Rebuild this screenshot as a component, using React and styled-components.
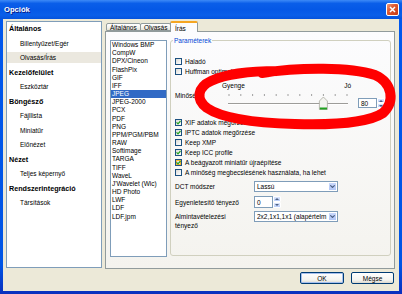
import React from 'react';
import styled, { createGlobalStyle } from 'styled-components';

const GlobalStyle = createGlobalStyle`
  html, body { margin: 0; padding: 0; background: #fff; }
  body {
    font-family: "Liberation Sans", Arial, sans-serif;
    font-size: 6.5px;
    color: #000;
  }
  * { box-sizing: border-box; }
`;

const Window = styled.div`
  position: relative;
  width: 402px;
  height: 294px;
  display: flex;
  flex-direction: column;
  background: linear-gradient(180deg, #0058ee 0%, #0055e5 90%, #0a2fbd 100%);
  overflow: hidden;
`;

const TitleBar = styled.div`
  height: 19px;
  flex-shrink: 0;
  display: flex;
  align-items: center;
  justify-content: space-between;
  padding: 0 3px 0 4px;
  background: linear-gradient(180deg, #3d8af7 0%, #0a5ee9 18%, #0558e6 50%, #0a5fe9 80%, #0553dc 100%);
`;

const Title = styled.span`
  color: #fff;
  font-weight: bold;
  font-size: 7.6px;
  text-shadow: 1px 1px 0 #0a1c86;
`;

const CloseButton = styled.div`
  width: 13px;
  height: 13px;
  border: 1px solid #fff;
  border-radius: 2px;
  background: linear-gradient(135deg, #f09a7c 0%, #e05a32 40%, #c73a12 100%);
  display: flex;
  align-items: center;
  justify-content: center;
`;

const Body = styled.div`
  flex: 1;
  margin: 0 3px 3px;
  background: #ece9d8;
  display: flex;
  flex-direction: column;
  padding: 2px 3px 0;
`;

const MainRow = styled.div`
  display: flex;
  gap: 3px;
  height: 249px;
`;

const Tree = styled.div`
  width: 96px;
  height: 247px;
  background: #fff;
  border: 1px solid #7f9db9;
  padding-top: 1px;
`;

const TreeRow = styled.div`
  height: 11px;
  margin-bottom: 3.5px;
  display: flex;
  align-items: center;
  white-space: nowrap;
  padding-left: ${p => (p.$heading ? 2 : 13)}px;
  font-weight: ${p => (p.$heading ? 'bold' : 'normal')};
  font-size: ${p => (p.$heading ? 7.2 : 6.5)}px;
  background: ${p => (p.$selected ? '#ebe8df' : 'transparent')};
`;

const TabControl = styled.div`
  width: 290px;
  display: flex;
  flex-direction: column;
`;

const TabStrip = styled.div`
  height: 10px;
  display: flex;
  align-items: flex-end;
  padding-left: 1px;
`;

const Tab = styled.div`
  position: relative;
  width: ${p => p.$w}px;
  height: ${p => (p.$active ? 11 : 8)}px;
  margin-bottom: ${p => (p.$active ? -1 : 0)}px;
  padding: ${p => (p.$active ? '2px 0 0 4px' : '0 0 0 3px')};
  display: flex;
  align-items: ${p => (p.$active ? 'flex-start' : 'center')};
  border: 1px solid #919b9c;
  border-bottom: ${p => (p.$active ? 'none' : '1px solid #919b9c')};
  border-top: ${p => (p.$active ? '2px solid #f5a623' : '1px solid #919b9c')};
  border-radius: 2px 2px 0 0;
  background: ${p => (p.$active ? '#fcfcfe' : 'linear-gradient(180deg, #fff 0%, #f3f2ee 60%, #e3e1d8 100%)')};
  margin-right: ${p => (p.$active ? 0 : -1)}px;
  z-index: ${p => (p.$active ? 2 : 1)};
  white-space: nowrap;
`;

const Panel = styled.div`
  height: 238px;
  border: 1px solid #919b9c;
  background: linear-gradient(180deg, #fcfcfe 0%, #f4f3ee 100%);
  display: flex;
  gap: 3px;
  padding: 8px 3px 0 4px;
`;

const FormatList = styled.div`
  width: 57px;
  height: 217px;
  border: 1px solid #7f9db9;
  background: #fff;
`;

const FormatItem = styled.div`
  height: 8.18px;
  line-height: 8.18px;
  padding-left: 1px;
  white-space: nowrap;
  background: ${p => (p.$selected ? '#316ac5' : 'transparent')};
  color: ${p => (p.$selected ? '#fff' : '#000')};
`;

const GroupBox = styled.div`
  width: 221px;
  height: 216px;
  border: 1px solid #d0d0bf;
  border-radius: 3px;
  padding: 0 4px;
  display: flex;
  flex-direction: column;
`;

const Legend = styled.div`
  align-self: flex-start;
  margin: -4.5px 0 0 -2px;
  padding: 0 1px;
  line-height: 8px;
  height: 8px;
  color: #0046d5;
  background: #fcfcfd;
`;

const CheckRow = styled.div`
  height: 10px;
  display: flex;
  align-items: center;
  white-space: nowrap;
  margin-top: ${p => p.$mt || 0}px;
`;

const Box = styled.div`
  width: 7px;
  height: 7px;
  margin-right: 3px;
  border: 1px solid #1c5180;
  background: linear-gradient(135deg, #dcdcd7 0%, #fff 100%);
  box-shadow: ${p => (p.$hover ? 'inset 0 0 0 1px #f8b636' : 'none')};
  display: flex;
  align-items: center;
  justify-content: center;
  flex-shrink: 0;
`;

const QualityRow = styled.div`
  margin-top: 6px;
  height: 30px;
  display: flex;
  align-items: flex-start;
`;

const QualityLabel = styled.div`
  width: 47px;
  margin-top: 10px;
  line-height: 8px;
`;

const SliderCol = styled.div`
  width: 130px;
  display: flex;
  flex-direction: column;
`;

const ScaleLabels = styled.div`
  height: 8px;
  line-height: 8px;
  display: flex;
  justify-content: space-between;
  padding-right: 1px;
`;

const Spin = styled.div`
  display: flex;
  height: ${p => p.$h}px;
  margin-left: ${p => p.$ml || 0}px;
  margin-top: ${p => p.$mt || 0}px;
`;

const SpinInput = styled.div`
  width: 19px;
  height: 100%;
  border: 1px solid #7f9db9;
  background: #fff;
  padding-left: 2px;
  display: flex;
  align-items: center;
`;

const SpinButtons = styled.div`
  width: 8px;
  height: 100%;
  display: flex;
  flex-direction: column;
`;

const SpinHalf = styled.div`
  flex: 1;
  border: 1px solid #fff;
  border-radius: 1px;
  background: linear-gradient(180deg, #dde7fd 0%, #b9cdf8 100%);
  display: flex;
  align-items: center;
  justify-content: center;
`;

const FieldRow = styled.div`
  display: flex;
  align-items: flex-start;
  margin-top: ${p => p.$mt}px;
`;

const FieldLabel = styled.div`
  width: 79px;
  flex-shrink: 0;
  line-height: 9px;
  padding-top: ${p => p.$pt || 0}px;
`;

const Combo = styled.div`
  width: 84px;
  height: 11px;
  border: 1px solid #7f9db9;
  background: #fff;
  display: flex;
  align-items: stretch;
`;

const ComboText = styled.div`
  flex: 1;
  padding-left: 2px;
  overflow: hidden;
  white-space: nowrap;
  display: flex;
  align-items: center;
`;

const ComboButton = styled.div`
  width: 9px;
  border: 1px solid #fff;
  border-radius: 1px;
  background: linear-gradient(180deg, #c9d8fc 0%, #b2c7f7 100%);
  display: flex;
  align-items: center;
  justify-content: center;
`;

const ButtonRow = styled.div`
  margin-top: 2px;
  height: 12px;
  display: flex;
  justify-content: flex-end;
  gap: 7px;
  padding-right: 2px;
`;

const Button = styled.div`
  width: ${p => p.$w}px;
  height: 12px;
  border: 1px solid #003c74;
  border-radius: 2px;
  background: linear-gradient(180deg, #ffffff 0%, #f4f4f0 70%, #dcd8ce 100%);
  box-shadow: ${p => (p.$default ? 'inset 0 0 0 1px #a6c0ee' : 'none')};
  display: flex;
  align-items: center;
  justify-content: center;
`;

const Overlay = styled.svg`
  position: absolute;
  left: 0;
  top: 0;
  pointer-events: none;
`;

const Check = () => (
  <svg width="5" height="5" viewBox="0 0 5 5">
    <path d="M0.5 2.4 L2 3.8 L4.5 1" stroke="#21a121" strokeWidth="1.2" fill="none" />
  </svg>
);

const Arrow = ({ up }) => (
  <svg width="4" height="2" viewBox="0 0 4 2">
    <path d={up ? 'M0 2 L2 0 L4 2 Z' : 'M0 0 L4 0 L2 2 Z'} fill="#4d6185" />
  </svg>
);

const ComboArrow = () => (
  <svg width="5" height="3" viewBox="0 0 5 3">
    <path d="M0.3 0.3 L2.5 2.5 L4.7 0.3" stroke="#4d6185" strokeWidth="1.1" fill="none" />
  </svg>
);

const CheckItem = ({ checked, hover, mt, children }) => (
  <CheckRow $mt={mt}>
    <Box $hover={hover}>{checked && <Check />}</Box>
    {children}
  </CheckRow>
);

const SpinBox = ({ value, h, ml, mt }) => (
  <Spin $h={h} $ml={ml} $mt={mt}>
    <SpinInput>{value}</SpinInput>
    <SpinButtons>
      <SpinHalf><Arrow up /></SpinHalf>
      <SpinHalf><Arrow /></SpinHalf>
    </SpinButtons>
  </Spin>
);

const ComboBox = ({ value }) => (
  <Combo>
    <ComboText>{value}</ComboText>
    <ComboButton><ComboArrow /></ComboButton>
  </Combo>
);

const Slider = () => {
  const ticks = Array.from({ length: 11 }, (_, i) => 7 + i * 11.8);
  const tx = 7 + 8 * 11.8;
  return (
    <svg width="130" height="22" viewBox="0 0 130 22">
      {ticks.map(x => (
        <rect key={x} x={x - 0.5} y="4" width="1" height="2" fill="#a0a0a0" />
      ))}
      <rect x="6" y="13" width="120" height="1" fill="#9d9c99" />
      <rect x="6" y="14" width="120" height="1" fill="#fff" />
      <path
        d={`M${tx - 4} 11 L${tx} 7 L${tx + 4} 11 L${tx + 4} 19.5 L${tx - 4} 19.5 Z`}
        fill="#f4f4f0"
        stroke="#a9a99f"
        strokeWidth="0.8"
      />
      <rect x={tx - 3.6} y="17.5" width="7.2" height="2" fill="#21a121" />
    </svg>
  );
};

const tree = [
  { t: 'Általános', h: true },
  { t: 'Billentyűzet/Egér' },
  { t: 'Olvasás/Írás', s: true },
  { t: 'Kezelőfelület', h: true },
  { t: 'Eszköztár' },
  { t: 'Böngésző', h: true },
  { t: 'Fájllista' },
  { t: 'Miniatűr' },
  { t: 'Előnézet' },
  { t: 'Nézet', h: true },
  { t: 'Teljes képernyő' },
  { t: 'Rendszerintegráció', h: true },
  { t: 'Társítások' },
];

const formats = [
  'Windows BMP', 'CompW', 'DPX/Cineon', 'FlashPix', 'GIF', 'IFF', 'JPEG',
  'JPEG-2000', 'PCX', 'PDF', 'PNG', 'PPM/PGM/PBM', 'RAW', 'Softimage',
  'TARGA', 'TIFF', 'WaveL', "J'Wavelet (Wic)", 'HD Photo', 'LWF', 'LDF', 'LDF.jpm',
];

export default function App() {
  return (
    <>
      <GlobalStyle />
      <Window>
        <TitleBar>
          <Title>Opciók</Title>
          <CloseButton>
            <svg width="7" height="7" viewBox="0 0 7 7">
              <path d="M1 1 L6 6 M6 1 L1 6" stroke="#fff" strokeWidth="1.5" />
            </svg>
          </CloseButton>
        </TitleBar>
        <Body>
          <MainRow>
            <Tree>
              {tree.map(r => (
                <TreeRow key={r.t} $heading={r.h} $selected={r.s}>{r.t}</TreeRow>
              ))}
            </Tree>
            <TabControl>
              <TabStrip>
                <Tab $w={35}>Általános</Tab>
                <Tab $w={31}>Olvasás</Tab>
                <Tab $w={28} $active>Írás</Tab>
              </TabStrip>
              <Panel>
                <FormatList>
                  {formats.map(f => (
                    <FormatItem key={f} $selected={f === 'JPEG'}>{f}</FormatItem>
                  ))}
                </FormatList>
                <GroupBox>
                  <Legend>Paraméterek</Legend>
                  <CheckItem mt={11.5}>Haladó</CheckItem>
                  <CheckItem>Huffman optimalizálás</CheckItem>
                  <QualityRow>
                    <QualityLabel>Minőség</QualityLabel>
                    <SliderCol>
                      <ScaleLabels>
                        <span>Gyenge</span>
                        <span>Jó</span>
                      </ScaleLabels>
                      <Slider />
                    </SliderCol>
                    <SpinBox value="80" h={10} ml={6} mt={16} />
                  </QualityRow>
                  <CheckItem checked mt={5}>XIF adatok megőrzése</CheckItem>
                  <CheckItem checked>IPTC adatok megőrzése</CheckItem>
                  <CheckItem>Keep XMP</CheckItem>
                  <CheckItem checked>Keep ICC profile</CheckItem>
                  <CheckItem checked hover>A beágyazott miniatűr újraépítése</CheckItem>
                  <CheckItem>A minőség megbecslésének használata, ha lehet</CheckItem>
                  <FieldRow $mt={4}>
                    <FieldLabel $pt={1}>DCT módszer</FieldLabel>
                    <ComboBox value="Lassú" />
                  </FieldRow>
                  <FieldRow $mt={4}>
                    <FieldLabel $pt={1.5}>Egyenletesítő tényező</FieldLabel>
                    <SpinBox value="0" h={12} />
                  </FieldRow>
                  <FieldRow $mt={3}>
                    <FieldLabel $pt={1}>Almintavételezési<br />tényező</FieldLabel>
                    <ComboBox value="2x2,1x1,1x1 (alapértelm" />
                  </FieldRow>
                </GroupBox>
              </Panel>
            </TabControl>
          </MainRow>
          <ButtonRow>
            <Button $w={44} $default>OK</Button>
            <Button $w={43}>Mégse</Button>
          </ButtonRow>
        </Body>
        <Overlay width="402" height="294" viewBox="0 0 402 294">
          <path
            d="M262 73 C300 67, 350 67, 375 75 C393 83, 395 102, 383 113 C368 123, 330 125, 295 124 C258 123, 223 119, 207 108 C195 99, 198 87, 211 81 C228 73, 250 71, 278 71"
            stroke="#ff0000"
            strokeWidth="10"
            strokeLinecap="round"
            fill="none"
          />
        </Overlay>
      </Window>
    </>
  );
}
